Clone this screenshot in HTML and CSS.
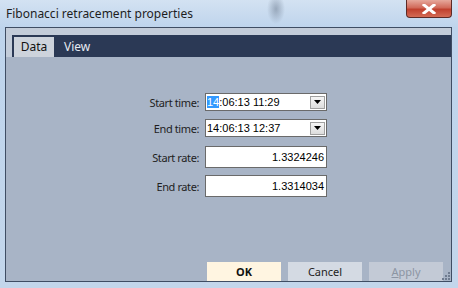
FILE: index.html
```html
<!DOCTYPE html>
<html lang="en">
<head>
    <meta charset="UTF-8">
    <title>Fibonacci retracement properties</title>
    <link rel="stylesheet" href="styles.css">
</head>
<body>
    <div class="window">
        <div class="titlebar">
            <span class="title">Fibonacci retracement properties</span>
            <div class="close-btn">
                <svg width="14" height="10" viewBox="0 0 14 10">
                    <path d="M2 1 L12 9 M12 1 L2 9" stroke="#ffffff" stroke-width="3" stroke-linecap="square"/>
                </svg>
            </div>
        </div>
        <div class="client">
            <div class="tabstrip">
                <div class="tab selected">Data</div>
                <div class="tab">View</div>
            </div>
            <div class="panel">
                <div class="form">
                    <label class="row-time">Start time:</label>
                    <div class="combo row-time">
                        <span class="combo-text"><span class="sel">14</span>:06:13 11:29</span>
                        <span class="drop"><svg width="7" height="4" viewBox="0 0 7 4"><path d="M0 0 H7 L3.5 4 Z" fill="#000"/></svg></span>
                    </div>

                    <label class="row-time2">End time:</label>
                    <div class="combo row-time2">
                        <span class="combo-text">14:06:13 12:37</span>
                        <span class="drop"><svg width="7" height="4" viewBox="0 0 7 4"><path d="M0 0 H7 L3.5 4 Z" fill="#000"/></svg></span>
                    </div>

                    <label class="row-rate">Start rate:</label>
                    <div class="rate row-rate">1.3324246</div>

                    <label class="row-rate2">End rate:</label>
                    <div class="rate row-rate2">1.3314034</div>
                </div>
                <div class="buttons">
                    <div class="btn ok">OK</div>
                    <div class="btn cancel">Cancel</div>
                    <div class="btn apply"><u>A</u>pply</div>
                </div>
                <div class="grip">
                    <svg width="9" height="9" viewBox="0 0 9 9">
                        <g fill="#6f7c90">
                            <rect x="7" y="1" width="2" height="2"/>
                            <rect x="4" y="4" width="2" height="2"/>
                            <rect x="7" y="4" width="2" height="2"/>
                            <rect x="1" y="7" width="2" height="2"/>
                            <rect x="4" y="7" width="2" height="2"/>
                            <rect x="7" y="7" width="2" height="2"/>
                        </g>
                    </svg>
                </div>
            </div>
        </div>
    </div>
</body>
</html>
```

FILE: styles.css
```css
body {
    margin: 0;
    padding: 0;
    background-color: #c4d6ea;
}

.window {
    width: 458px;
    height: 288px;
    background: radial-gradient(ellipse 9px 15px at 276px 9px, rgba(110, 125, 145, 0.55), rgba(110, 125, 145, 0) 100%),
                linear-gradient(to bottom, #d3e2f2 0px, #bed4ec 28px, #c3d6eb 100%);
    font-family: "Liberation Sans", Arial, sans-serif;
    overflow: hidden;
}

.titlebar {
    height: 27px;
    display: flex;
    justify-content: space-between;
    align-items: flex-start;
}

.title {
    font-family: "Noto Sans", "Open Sans", sans-serif;
    font-size: 12px;
    color: #1e1e1e;
    padding-left: 6px;
    padding-top: 5px;
}

.close-btn {
    width: 44px;
    height: 17px;
    margin-right: 6px;
    border: 1px solid #5d2a26;
    border-top: none;
    border-radius: 0 0 4px 4px;
    background: linear-gradient(to bottom, #e6a89c 0%, #d16a5a 45%, #c0402e 55%, #d46b55 100%);
    display: flex;
    align-items: center;
    justify-content: center;
}

.client {
    height: 246px;
    margin: 0 6px 0 5px;
    border: 1px solid #3f4d63;
    background-color: #c3ccd9;
    padding-top: 7px;
    display: flex;
    flex-direction: column;
}

.tabstrip {
    height: 22px;
    flex-shrink: 0;
    margin-left: 6px;
    background-color: #2b3955;
    display: flex;
    align-items: flex-end;
    padding-left: 2px;
}

.tab {
    height: 20px;
    line-height: 19px;
    font-family: "Noto Sans", "Open Sans", sans-serif;
    font-size: 12px;
    color: #e6ebf2;
    padding: 0 10px;
}

.tab.selected {
    width: 40px;
    padding: 0;
    text-align: center;
    background-color: #cdd3dc;
    color: #111111;
}

.panel {
    flex: 1;
    position: relative;
    background-color: #a8b4c6;
    display: flex;
    flex-direction: column;
}

.form {
    display: grid;
    grid-template-columns: 193px 122px;
    column-gap: 6px;
    padding-top: 36px;
    font-size: 11px;
}

.form label {
    text-align: right;
    color: #1e1e1e;
    font-family: "Noto Sans", "Open Sans", sans-serif;
    font-size: 11px;
    letter-spacing: -0.4px;
    align-self: center;
}

.combo {
    height: 16px;
    background-color: #ffffff;
    border: 1px solid #6a6a6a;
    display: flex;
    align-items: center;
    justify-content: space-between;
}

.row-time2 {
    margin-top: 8px;
}

.row-rate {
    margin-top: 9px;
}

.row-rate2 {
    margin-top: 7px;
}

.combo-text {
    padding-left: 1px;
    color: #000000;
}

.sel {
    background-color: #3399ff;
    color: #ffffff;
}

.drop {
    width: 15px;
    height: 13px;
    margin-right: 1px;
    background: linear-gradient(to bottom, #f6f6f6, #dcdcdc);
    border: 1px solid #a0a0a0;
    box-sizing: border-box;
    display: flex;
    align-items: center;
    justify-content: center;
}

.rate {
    height: 20px;
    line-height: 20px;
    background-color: #ffffff;
    border: 1px solid #6a6a6a;
    text-align: right;
    padding-right: 2px;
    color: #000000;
}

.buttons {
    margin-top: auto;
    display: flex;
    justify-content: flex-end;
    gap: 7px;
    padding-right: 8px;
}

.btn {
    width: 74px;
    height: 19px;
    line-height: 19px;
    text-align: center;
    font-family: "Noto Sans", "Open Sans", sans-serif;
    font-size: 11px;
}

.btn.ok {
    background-color: #fff5e1;
    font-weight: bold;
    color: #111111;
}

.btn.cancel {
    background-color: #d4dae3;
    color: #222222;
}

.btn.apply {
    background-color: #c3cad6;
    color: #8c95a3;
}

.grip {
    position: absolute;
    right: 1px;
    bottom: 1px;
    line-height: 0;
}
```
